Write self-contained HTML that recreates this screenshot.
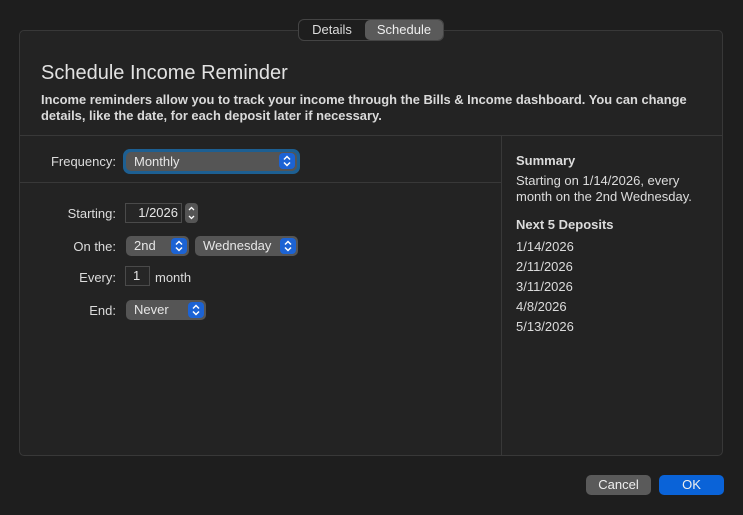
<!DOCTYPE html>
<html><head><meta charset="utf-8"><style>
*{margin:0;padding:0;box-sizing:border-box}
body{width:743px;height:515px;background:#1e1e1e;font-family:"Liberation Sans",sans-serif;color:#dcdcdc;position:relative;overflow:hidden;font-size:13px}
.a{position:absolute;white-space:nowrap}
.box{position:absolute;left:19px;top:30px;width:704px;height:426px;background:#232323;border:1px solid #383838;border-radius:5px}
.seg{position:absolute;left:298px;top:19px;width:146px;height:22px;background:#1e1e1e;border:1px solid #444;border-radius:6px}
.pop{position:absolute;height:20px;background:#555;border-radius:5px;color:#e6e6e6;font-size:13px;line-height:20px;padding-left:8px}
.arr{position:absolute;right:2px;top:2px;width:16px;height:16px;background:#1c63d4;border-radius:4px}
.arr svg{position:absolute;left:3px;top:2px}
.field{position:absolute;height:20px;border:1px solid #4a4a4a;background:#262626;color:#e6e6e6;line-height:18px;font-size:13px}
.lbl{position:absolute;text-align:right;font-size:13px;color:#dcdcdc}
.btn{position:absolute;top:475px;height:20px;border-radius:5px;font-size:13px;line-height:20px;text-align:center;color:#eee}
</style></head><body>
<div class="box"></div>
<div class="seg">
  <div class="a" style="left:0;top:0;width:66px;height:20px;line-height:20px;text-align:center;color:#ddd">Details</div>
  <div class="a" style="left:66px;top:0;width:78px;height:20px;background:#5a5a5a;border-radius:5px;line-height:20px;text-align:center;color:#eee">Schedule</div>
</div>
<div class="a" style="left:41px;top:62px;font-size:20px;color:#e2e2e2">Schedule Income Reminder</div>
<div class="a" style="left:41px;top:92px;font-size:12.9px;font-weight:bold;line-height:16px;color:#dadada">Income reminders allow you to track your income through the Bills &amp; Income dashboard. You can change<br>details, like the date, for each deposit later if necessary.</div>
<div class="a" style="left:20px;top:135px;width:702px;height:1px;background:#383838"></div>
<div class="a" style="left:501px;top:136px;width:1px;height:319px;background:#383838"></div>
<div class="a" style="left:20px;top:182px;width:481px;height:1px;background:#383838"></div>

<div class="lbl" style="left:30px;width:86px;top:154px">Frequency:</div>
<div class="a" style="left:123px;top:149px;width:177px;height:25px;border-radius:7px;background:#1d5f92"></div>
<div class="pop" style="left:126px;top:152px;width:171px;height:19px;line-height:19px">Monthly<div class="arr" style="top:1px"><svg width="10" height="12" viewBox="0 0 10 12"><path d="M2 4.5L5 1.5L8 4.5M2 7.5L5 10.5L8 7.5" fill="none" stroke="#fff" stroke-width="1.5"/></svg></div></div>

<div class="lbl" style="left:30px;width:86px;top:206px">Starting:</div>
<div class="field" style="left:125px;top:203px;width:57px;text-align:right;padding-right:3px">1/2026</div>
<div class="a" style="left:185px;top:203px;width:13px;height:20px;background:#555;border-radius:4px"><svg width="13" height="20" viewBox="0 0 13 20"><path d="M4 7L6.5 4.5L9 7M4 13L6.5 15.5L9 13" fill="none" stroke="#fff" stroke-width="1.3"/></svg></div>

<div class="lbl" style="left:30px;width:86px;top:239px">On the:</div>
<div class="pop" style="left:126px;top:236px;width:63px">2nd<div class="arr"><svg width="10" height="12" viewBox="0 0 10 12"><path d="M2 4.5L5 1.5L8 4.5M2 7.5L5 10.5L8 7.5" fill="none" stroke="#fff" stroke-width="1.5"/></svg></div></div>
<div class="pop" style="left:195px;top:236px;width:103px">Wednesday<div class="arr"><svg width="10" height="12" viewBox="0 0 10 12"><path d="M2 4.5L5 1.5L8 4.5M2 7.5L5 10.5L8 7.5" fill="none" stroke="#fff" stroke-width="1.5"/></svg></div></div>

<div class="lbl" style="left:30px;width:86px;top:270px">Every:</div>
<div class="field" style="left:125px;top:266px;width:25px;padding-left:7px">1</div>
<div class="a" style="left:155px;top:270px">month</div>

<div class="lbl" style="left:30px;width:86px;top:303px">End:</div>
<div class="pop" style="left:126px;top:300px;width:80px">Never<div class="arr"><svg width="10" height="12" viewBox="0 0 10 12"><path d="M2 4.5L5 1.5L8 4.5M2 7.5L5 10.5L8 7.5" fill="none" stroke="#fff" stroke-width="1.5"/></svg></div></div>

<div class="a" style="left:516px;top:153px;font-weight:bold;font-size:13px">Summary</div>
<div class="a" style="left:516px;top:173px;line-height:16px;font-size:13px">Starting on 1/14/2026, every<br>month on the 2nd Wednesday.</div>
<div class="a" style="left:516px;top:217px;font-weight:bold;font-size:13px">Next 5 Deposits</div>
<div class="a" style="left:516px;top:237px;line-height:20px;font-size:13px">1/14/2026<br>2/11/2026<br>3/11/2026<br>4/8/2026<br>5/13/2026</div>

<div class="btn" style="left:586px;width:65px;background:#5a5a5a">Cancel</div>
<div class="btn" style="left:659px;width:65px;background:#0a63d8">OK</div>
</body></html>
